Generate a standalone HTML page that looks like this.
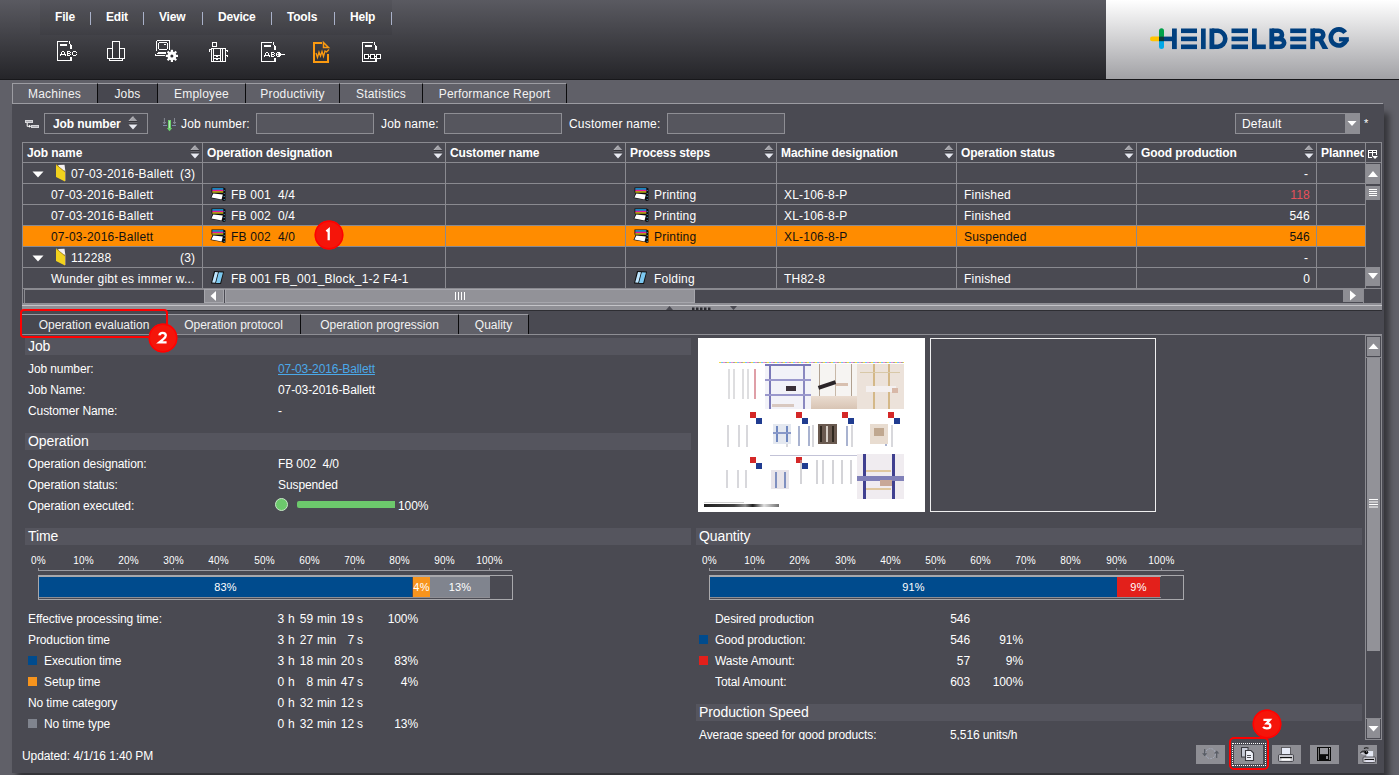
<!DOCTYPE html>
<html><head><meta charset="utf-8">
<style>
*{margin:0;padding:0;box-sizing:border-box}
html,body{width:1399px;height:775px;overflow:hidden}
body{background:#606068;font-family:"Liberation Sans",sans-serif;font-size:12px;color:#fff;position:relative}
.a{position:absolute}
.t{position:absolute;white-space:nowrap;line-height:14px;letter-spacing:0.2px}
#hdr{left:0;top:0;width:1399px;height:80px;background:linear-gradient(#5a5a61,#252529);border-bottom:1px solid #18181b}
#menubg{left:40px;top:0;width:352px;height:35px;background:rgba(0,0,0,0.05)}
.menu{font-weight:bold;font-size:12px;top:10px;letter-spacing:-0.2px}
.msep{top:12px;width:1px;height:13px;background:#a9b1c9}
#logo{left:1106px;top:0;width:293px;height:79px;background:linear-gradient(#ffffff,#a1a1a5)}
.tab{top:83px;height:20px;background:#606068;border-top:1px solid #9c9ca2;border-right:1px solid #0a0a0c;text-align:center;line-height:20px;color:#f2f2f2;letter-spacing:0.2px}
.tabsel{background:#47474f}
#main{left:12px;top:104px;width:1372px;height:669px;background:#4a4a52;box-shadow:5px 9px 6px rgba(0,0,0,0.45)}
.box{border:1px solid #8a8a90}
.grid{background:#8a8a90}
.hdt{font-weight:bold;color:#fff}
.cell{color:#fff}
</style></head><body>
<div id="hdr" class="a"></div>
<div id="menubg" class="a"></div>
<div class="t menu" style="left:55px">File</div>
<div class="a msep" style="left:90px"></div>
<div class="t menu" style="left:106px">Edit</div>
<div class="a msep" style="left:143px"></div>
<div class="t menu" style="left:159px">View</div>
<div class="a msep" style="left:202px"></div>
<div class="t menu" style="left:218px">Device</div>
<div class="a msep" style="left:271px"></div>
<div class="t menu" style="left:287px">Tools</div>
<div class="a msep" style="left:334px"></div>
<div class="t menu" style="left:350px">Help</div>
<div class="a msep" style="left:391px"></div>

<div id="logo" class="a"></div>

<!-- top tabs -->
<div class="a tab" style="left:12px;width:86px">Machines</div>
<div class="a tab tabsel" style="left:98px;width:60px">Jobs</div>
<div class="a tab" style="left:158px;width:88px">Employee</div>
<div class="a tab" style="left:246px;width:94px">Productivity</div>
<div class="a tab" style="left:340px;width:83px">Statistics</div>
<div class="a tab" style="left:423px;width:144px">Performance Report</div>

<div id="main" class="a"></div>
<div class="a" style="left:12px;top:103px;width:1371px;height:1px;background:#9c9ca2"></div>
<div class="a" style="left:12px;top:83px;width:1px;height:20px;background:#9c9ca2"></div>


<!-- filter row -->
<svg class="a" style="left:20px;top:113px" width="24" height="22" viewBox="0 0 24 22"><rect x="5" y="7" width="8" height="3" fill="#d8d8dc"/><rect x="6" y="8.2" width="6" height="0.7" fill="#9a9aa0"/><path d="M7.2 10 V13.3 H10.5" stroke="#fff" stroke-width="1" fill="none"/><path d="M9 11.8 L11 13.3 L9 14.8Z" fill="#fff"/><rect x="11" y="12" width="8" height="3" fill="#d8d8dc"/><rect x="12" y="13.2" width="6" height="0.7" fill="#9a9aa0"/></svg>
<div class="a" style="left:44px;top:113px;width:104px;height:21px;border:1px solid #8e8e94;background:#4a4a52"></div>
<div class="t" style="left:53px;top:117px;font-weight:bold;letter-spacing:-0.1px">Job number</div>
<svg class="a" style="left:128px;top:116px" width="10" height="14" viewBox="0 0 10 14"><path d="M0.5 5.2 L5 0.3 L9.5 5.2Z" fill="#a2a2a8"/><path d="M0.8 5 L5 0.5" stroke="#d4d4d8" stroke-width="0.7"/><rect x="0.5" y="5.2" width="9" height="1" fill="#2a2a30"/><rect x="0.5" y="6.2" width="9" height="1.3" fill="#6a6a72"/><rect x="0.5" y="7.5" width="9" height="1" fill="#2a2a30"/><path d="M0.5 8.5 L9.5 8.5 L5 13.6Z" fill="#e8eaf2"/></svg>
<svg class="a" style="left:158px;top:113px" width="24" height="22" viewBox="0 0 24 22"><path d="M6.4 5V10.5M5 9L6.4 10.8L7.8 9" stroke="#8a8e9a" stroke-width="0.9" fill="none"/><path d="M16.5 5V10.5M15.1 9L16.5 10.8L17.9 9" stroke="#8a8e9a" stroke-width="0.9" fill="none"/><rect x="5" y="12" width="4" height="1" fill="#7c88a8"/><rect x="14" y="12" width="4" height="1" fill="#7c88a8"/><rect x="10" y="7" width="3" height="8.5" fill="#6ccf6c"/><rect x="11.2" y="8" width="0.8" height="7" fill="#c8f0c8"/><path d="M8.8 15 L14.2 15 L11.5 18.3Z" fill="#6ccf6c"/></svg>
<div class="t" style="left:181px;top:117px">Job number:</div>
<div class="a" style="left:256px;top:113px;width:118px;height:21px;border:1px solid #8e8e94;background:#56565e"></div>
<div class="t" style="left:381px;top:117px">Job name:</div>
<div class="a" style="left:444px;top:113px;width:118px;height:21px;border:1px solid #8e8e94;background:#56565e"></div>
<div class="t" style="left:569px;top:117px">Customer name:</div>
<div class="a" style="left:667px;top:113px;width:118px;height:21px;border:1px solid #8e8e94;background:#56565e"></div>
<div class="a" style="left:1235px;top:113px;width:125px;height:21px;border:1px solid #8e8e94;background:#56565e"></div>
<div class="t" style="left:1242px;top:117px">Default</div>
<div class="a" style="left:1345px;top:114px;width:14px;height:19px;background:#8e8e94"></div>
<svg class="a" style="left:1345px;top:120px" width="14" height="8"><path d="M2.5 1 L11.5 1 L7 6Z" fill="#fff"/></svg>
<div class="t" style="left:1364px;top:116px;font-size:11px">*</div>

<div class="a" style="left:22px;top:142px;width:1360px;height:162px;background:#4a4a52"></div>
<div class="a" style="left:23px;top:226px;width:1342px;height:20px;background:#ff8c00"></div>
<div class="a grid" style="left:22px;top:142px;width:1360px;height:1px"></div>
<div class="a grid" style="left:22px;top:162px;width:1360px;height:1px"></div>
<div class="a grid" style="left:22px;top:183px;width:1344px;height:1px"></div>
<div class="a grid" style="left:22px;top:204px;width:1344px;height:1px"></div>
<div class="a grid" style="left:22px;top:225px;width:1344px;height:1px"></div>
<div class="a grid" style="left:22px;top:246px;width:1344px;height:1px"></div>
<div class="a grid" style="left:22px;top:267px;width:1344px;height:1px"></div>
<div class="a grid" style="left:22px;top:288px;width:1360px;height:1px"></div>
<div class="a grid" style="left:22px;top:303px;width:1360px;height:1px"></div>
<div class="a grid" style="left:22px;top:142px;width:1px;height:146px"></div>
<div class="a grid" style="left:202px;top:142px;width:1px;height:146px"></div>
<div class="a grid" style="left:445px;top:142px;width:1px;height:146px"></div>
<div class="a grid" style="left:625px;top:142px;width:1px;height:146px"></div>
<div class="a grid" style="left:776px;top:142px;width:1px;height:146px"></div>
<div class="a grid" style="left:956px;top:142px;width:1px;height:146px"></div>
<div class="a grid" style="left:1136px;top:142px;width:1px;height:146px"></div>
<div class="a grid" style="left:1316px;top:142px;width:1px;height:146px"></div>
<div class="a grid" style="left:1365px;top:142px;width:1px;height:146px"></div>
<div class="a grid" style="left:1381px;top:142px;width:1px;height:162px"></div>
<div class="a grid" style="left:22px;top:288px;width:1px;height:16px"></div>
<div class="t" style="left:27px;top:146px;font-weight:bold;letter-spacing:-0.1px">Job name</div>
<svg class="a" style="left:190px;top:145px" width="10" height="14" viewBox="0 0 10 14"><path d="M0.5 5.2 L5 0.3 L9.5 5.2Z" fill="#a2a2a8"/><path d="M0.8 5 L5 0.5" stroke="#d4d4d8" stroke-width="0.7"/><rect x="0.5" y="5.2" width="9" height="1" fill="#2a2a30"/><rect x="0.5" y="6.2" width="9" height="1.3" fill="#6a6a72"/><rect x="0.5" y="7.5" width="9" height="1" fill="#2a2a30"/><path d="M0.5 8.5 L9.5 8.5 L5 13.6Z" fill="#e8eaf2"/></svg>
<div class="t" style="left:207px;top:146px;font-weight:bold;letter-spacing:-0.1px">Operation designation</div>
<svg class="a" style="left:433px;top:145px" width="10" height="14" viewBox="0 0 10 14"><path d="M0.5 5.2 L5 0.3 L9.5 5.2Z" fill="#a2a2a8"/><path d="M0.8 5 L5 0.5" stroke="#d4d4d8" stroke-width="0.7"/><rect x="0.5" y="5.2" width="9" height="1" fill="#2a2a30"/><rect x="0.5" y="6.2" width="9" height="1.3" fill="#6a6a72"/><rect x="0.5" y="7.5" width="9" height="1" fill="#2a2a30"/><path d="M0.5 8.5 L9.5 8.5 L5 13.6Z" fill="#e8eaf2"/></svg>
<div class="t" style="left:450px;top:146px;font-weight:bold;letter-spacing:-0.1px">Customer name</div>
<svg class="a" style="left:613px;top:145px" width="10" height="14" viewBox="0 0 10 14"><path d="M0.5 5.2 L5 0.3 L9.5 5.2Z" fill="#a2a2a8"/><path d="M0.8 5 L5 0.5" stroke="#d4d4d8" stroke-width="0.7"/><rect x="0.5" y="5.2" width="9" height="1" fill="#2a2a30"/><rect x="0.5" y="6.2" width="9" height="1.3" fill="#6a6a72"/><rect x="0.5" y="7.5" width="9" height="1" fill="#2a2a30"/><path d="M0.5 8.5 L9.5 8.5 L5 13.6Z" fill="#e8eaf2"/></svg>
<div class="t" style="left:630px;top:146px;font-weight:bold;letter-spacing:-0.1px">Process steps</div>
<svg class="a" style="left:764px;top:145px" width="10" height="14" viewBox="0 0 10 14"><path d="M0.5 5.2 L5 0.3 L9.5 5.2Z" fill="#a2a2a8"/><path d="M0.8 5 L5 0.5" stroke="#d4d4d8" stroke-width="0.7"/><rect x="0.5" y="5.2" width="9" height="1" fill="#2a2a30"/><rect x="0.5" y="6.2" width="9" height="1.3" fill="#6a6a72"/><rect x="0.5" y="7.5" width="9" height="1" fill="#2a2a30"/><path d="M0.5 8.5 L9.5 8.5 L5 13.6Z" fill="#e8eaf2"/></svg>
<div class="t" style="left:781px;top:146px;font-weight:bold;letter-spacing:-0.1px">Machine designation</div>
<svg class="a" style="left:944px;top:145px" width="10" height="14" viewBox="0 0 10 14"><path d="M0.5 5.2 L5 0.3 L9.5 5.2Z" fill="#a2a2a8"/><path d="M0.8 5 L5 0.5" stroke="#d4d4d8" stroke-width="0.7"/><rect x="0.5" y="5.2" width="9" height="1" fill="#2a2a30"/><rect x="0.5" y="6.2" width="9" height="1.3" fill="#6a6a72"/><rect x="0.5" y="7.5" width="9" height="1" fill="#2a2a30"/><path d="M0.5 8.5 L9.5 8.5 L5 13.6Z" fill="#e8eaf2"/></svg>
<div class="t" style="left:961px;top:146px;font-weight:bold;letter-spacing:-0.1px">Operation status</div>
<svg class="a" style="left:1124px;top:145px" width="10" height="14" viewBox="0 0 10 14"><path d="M0.5 5.2 L5 0.3 L9.5 5.2Z" fill="#a2a2a8"/><path d="M0.8 5 L5 0.5" stroke="#d4d4d8" stroke-width="0.7"/><rect x="0.5" y="5.2" width="9" height="1" fill="#2a2a30"/><rect x="0.5" y="6.2" width="9" height="1.3" fill="#6a6a72"/><rect x="0.5" y="7.5" width="9" height="1" fill="#2a2a30"/><path d="M0.5 8.5 L9.5 8.5 L5 13.6Z" fill="#e8eaf2"/></svg>
<div class="t" style="left:1141px;top:146px;font-weight:bold;letter-spacing:-0.1px">Good production</div>
<svg class="a" style="left:1304px;top:145px" width="10" height="14" viewBox="0 0 10 14"><path d="M0.5 5.2 L5 0.3 L9.5 5.2Z" fill="#a2a2a8"/><path d="M0.8 5 L5 0.5" stroke="#d4d4d8" stroke-width="0.7"/><rect x="0.5" y="5.2" width="9" height="1" fill="#2a2a30"/><rect x="0.5" y="6.2" width="9" height="1.3" fill="#6a6a72"/><rect x="0.5" y="7.5" width="9" height="1" fill="#2a2a30"/><path d="M0.5 8.5 L9.5 8.5 L5 13.6Z" fill="#e8eaf2"/></svg>
<div class="t" style="left:1321px;top:146px;width:43px;overflow:hidden;font-weight:bold;letter-spacing:-0.1px">Planned</div>
<svg class="a" style="left:32px;top:171px" width="12" height="7"><path d="M0.5 0.5 L11.5 0.5 L6 6.5Z" fill="#fff"/></svg>
<svg class="a" style="left:55px;top:164px" width="12" height="18" viewBox="0 0 12 18"><path d="M3 1 L9.5 0.8 L10.5 8 L4 3Z" fill="#f4f0f0"/><path d="M9.5 6 L11 7 L11 17 L9.8 17Z" fill="#8a7a70"/><path d="M1 0.5 L4 3 L10 8 L10 17.5 L1 13Z" fill="#f2d21e"/><path d="M1 0.5 L4 3 L10 8" stroke="#b08a10" stroke-width="0.7" fill="none"/></svg>
<div class="t" style="left:71px;top:167px;">07-03-2016-Ballett</div>
<div class="t" style="left:180px;top:167px;">(3)</div>
<div class="t" style="left:1304px;top:167px;">-</div>
<div class="t" style="left:51px;top:188px;color:#fff">07-03-2016-Ballett</div>
<svg class="a" style="left:210px;top:187px" width="16" height="15" viewBox="0 0 16 15"><path d="M1.5 0.5 L13.5 0.5 L15.5 1.5 L15.5 13.5 L13.5 14 L12 13 L0.5 11 L2.5 6 L1.5 5.5Z" fill="#0c0c10"/><rect x="2.3" y="1.2" width="11" height="1.6" fill="#18a8e8"/><rect x="2.3" y="2.8" width="11" height="1.5" fill="#e8189a"/><rect x="2.3" y="4.3" width="11" height="1.3" fill="#e0d010"/><path d="M3.3 6.5 L12.8 7.6 L11.6 12.6 L1.4 10.6Z" fill="#fff"/><path d="M14.2 3v1M14.2 6v1M14.2 9v1M14.2 12v1" stroke="#4ab0d0" stroke-width="0.9"/></svg>
<div class="t" style="left:231px;top:188px;color:#fff">FB 001&nbsp; 4/4</div>
<svg class="a" style="left:633px;top:187px" width="16" height="15" viewBox="0 0 16 15"><path d="M1.5 0.5 L13.5 0.5 L15.5 1.5 L15.5 13.5 L13.5 14 L12 13 L0.5 11 L2.5 6 L1.5 5.5Z" fill="#0c0c10"/><rect x="2.3" y="1.2" width="11" height="1.6" fill="#18a8e8"/><rect x="2.3" y="2.8" width="11" height="1.5" fill="#e8189a"/><rect x="2.3" y="4.3" width="11" height="1.3" fill="#e0d010"/><path d="M3.3 6.5 L12.8 7.6 L11.6 12.6 L1.4 10.6Z" fill="#fff"/><path d="M14.2 3v1M14.2 6v1M14.2 9v1M14.2 12v1" stroke="#4ab0d0" stroke-width="0.9"/></svg>
<div class="t" style="left:654px;top:188px;color:#fff">Printing</div>
<div class="t" style="left:784px;top:188px;color:#fff">XL-106-8-P</div>
<div class="t" style="left:964px;top:188px;color:#fff">Finished</div>
<div class="t" style="left:1200px;width:110px;text-align:right;top:188px;color:#e8505a">118</div>
<div class="t" style="left:51px;top:209px;color:#fff">07-03-2016-Ballett</div>
<svg class="a" style="left:210px;top:208px" width="16" height="15" viewBox="0 0 16 15"><path d="M1.5 0.5 L13.5 0.5 L15.5 1.5 L15.5 13.5 L13.5 14 L12 13 L0.5 11 L2.5 6 L1.5 5.5Z" fill="#0c0c10"/><rect x="2.3" y="1.2" width="11" height="1.6" fill="#18a8e8"/><rect x="2.3" y="2.8" width="11" height="1.5" fill="#e8189a"/><rect x="2.3" y="4.3" width="11" height="1.3" fill="#e0d010"/><path d="M3.3 6.5 L12.8 7.6 L11.6 12.6 L1.4 10.6Z" fill="#fff"/><path d="M14.2 3v1M14.2 6v1M14.2 9v1M14.2 12v1" stroke="#4ab0d0" stroke-width="0.9"/></svg>
<div class="t" style="left:231px;top:209px;color:#fff">FB 002&nbsp; 0/4</div>
<svg class="a" style="left:633px;top:208px" width="16" height="15" viewBox="0 0 16 15"><path d="M1.5 0.5 L13.5 0.5 L15.5 1.5 L15.5 13.5 L13.5 14 L12 13 L0.5 11 L2.5 6 L1.5 5.5Z" fill="#0c0c10"/><rect x="2.3" y="1.2" width="11" height="1.6" fill="#18a8e8"/><rect x="2.3" y="2.8" width="11" height="1.5" fill="#e8189a"/><rect x="2.3" y="4.3" width="11" height="1.3" fill="#e0d010"/><path d="M3.3 6.5 L12.8 7.6 L11.6 12.6 L1.4 10.6Z" fill="#fff"/><path d="M14.2 3v1M14.2 6v1M14.2 9v1M14.2 12v1" stroke="#4ab0d0" stroke-width="0.9"/></svg>
<div class="t" style="left:654px;top:209px;color:#fff">Printing</div>
<div class="t" style="left:784px;top:209px;color:#fff">XL-106-8-P</div>
<div class="t" style="left:964px;top:209px;color:#fff">Finished</div>
<div class="t" style="left:1200px;width:110px;text-align:right;top:209px;color:#fff">546</div>
<div class="t" style="left:51px;top:230px;color:#111">07-03-2016-Ballett</div>
<svg class="a" style="left:210px;top:229px" width="16" height="15" viewBox="0 0 16 15"><path d="M1.5 0.5 L13.5 0.5 L15.5 1.5 L15.5 13.5 L13.5 14 L12 13 L0.5 11 L2.5 6 L1.5 5.5Z" fill="#0c0c10"/><rect x="2.3" y="1.2" width="11" height="1.6" fill="#18a8e8"/><rect x="2.3" y="2.8" width="11" height="1.5" fill="#e8189a"/><rect x="2.3" y="4.3" width="11" height="1.3" fill="#e0d010"/><path d="M3.3 6.5 L12.8 7.6 L11.6 12.6 L1.4 10.6Z" fill="#fff"/><path d="M14.2 3v1M14.2 6v1M14.2 9v1M14.2 12v1" stroke="#4ab0d0" stroke-width="0.9"/></svg>
<div class="t" style="left:231px;top:230px;color:#111">FB 002&nbsp; 4/0</div>
<svg class="a" style="left:633px;top:229px" width="16" height="15" viewBox="0 0 16 15"><path d="M1.5 0.5 L13.5 0.5 L15.5 1.5 L15.5 13.5 L13.5 14 L12 13 L0.5 11 L2.5 6 L1.5 5.5Z" fill="#0c0c10"/><rect x="2.3" y="1.2" width="11" height="1.6" fill="#18a8e8"/><rect x="2.3" y="2.8" width="11" height="1.5" fill="#e8189a"/><rect x="2.3" y="4.3" width="11" height="1.3" fill="#e0d010"/><path d="M3.3 6.5 L12.8 7.6 L11.6 12.6 L1.4 10.6Z" fill="#fff"/><path d="M14.2 3v1M14.2 6v1M14.2 9v1M14.2 12v1" stroke="#4ab0d0" stroke-width="0.9"/></svg>
<div class="t" style="left:654px;top:230px;color:#111">Printing</div>
<div class="t" style="left:784px;top:230px;color:#111">XL-106-8-P</div>
<div class="t" style="left:964px;top:230px;color:#111">Suspended</div>
<div class="t" style="left:1200px;width:110px;text-align:right;top:230px;color:#111">546</div>
<svg class="a" style="left:32px;top:255px" width="12" height="7"><path d="M0.5 0.5 L11.5 0.5 L6 6.5Z" fill="#fff"/></svg>
<svg class="a" style="left:55px;top:248px" width="12" height="18" viewBox="0 0 12 18"><path d="M3 1 L9.5 0.8 L10.5 8 L4 3Z" fill="#f4f0f0"/><path d="M9.5 6 L11 7 L11 17 L9.8 17Z" fill="#8a7a70"/><path d="M1 0.5 L4 3 L10 8 L10 17.5 L1 13Z" fill="#f2d21e"/><path d="M1 0.5 L4 3 L10 8" stroke="#b08a10" stroke-width="0.7" fill="none"/></svg>
<div class="t" style="left:71px;top:251px;">112288</div>
<div class="t" style="left:180px;top:251px;">(3)</div>
<div class="t" style="left:1304px;top:251px;">-</div>
<div class="t" style="left:51px;top:272px;">Wunder gibt es immer w...</div>
<svg class="a" style="left:210px;top:270px" width="16" height="15" viewBox="0 0 16 15"><path d="M4 1 L14 1.5 L11 14 L1 13.5Z" fill="#111"/><path d="M5 2 L8 2.2 L5.2 12.8 L2.2 12.6Z" fill="#bfe6ff"/><path d="M8.8 2.2 L13 2.5 L10.2 13 L6 12.9Z" fill="#7cc8f0"/></svg>
<div class="t" style="left:231px;top:272px;">FB 001 FB_001_Block_1-2 F4-1</div>
<svg class="a" style="left:633px;top:270px" width="16" height="15" viewBox="0 0 16 15"><path d="M4 1 L14 1.5 L11 14 L1 13.5Z" fill="#111"/><path d="M5 2 L8 2.2 L5.2 12.8 L2.2 12.6Z" fill="#bfe6ff"/><path d="M8.8 2.2 L13 2.5 L10.2 13 L6 12.9Z" fill="#7cc8f0"/></svg>
<div class="t" style="left:654px;top:272px;">Folding</div>
<div class="t" style="left:784px;top:272px;">TH82-8</div>
<div class="t" style="left:964px;top:272px;">Finished</div>
<div class="t" style="left:1200px;width:110px;text-align:right;top:272px">0</div>
<div class="a" style="left:24px;top:289px;width:1340px;height:14px;border:1px solid #8a8a90;border-bottom:none;background:#4a4a52"></div>
<div class="a" style="left:204px;top:289px;width:20px;height:14px;background:#8e8e94;border:1px solid #a6a6ac"></div>
<svg class="a" style="left:204px;top:289px" width="20" height="14"><path d="M6.5 7 L12 2 L12 12Z" fill="#fff"/></svg>
<div class="a" style="left:225px;top:289px;width:470px;height:14px;background:#929298;border:1px solid #a6a6ac"></div>
<svg class="a" style="left:454px;top:291px" width="12" height="10" shape-rendering="crispEdges"><path d="M1.5 1V9M4.5 1V9M7.5 1V9M10.5 1V9" stroke="#fff" stroke-width="1"/></svg>
<div class="a" style="left:1343px;top:289px;width:20px;height:13px;background:#8e8e94"></div>
<svg class="a" style="left:1343px;top:289px" width="20" height="13"><path d="M7 1.5 L13 6.5 L7 11.5Z" fill="#fff"/></svg>
<div class="a" style="left:1366px;top:164px;width:14px;height:20px;background:#8e8e94"></div>
<svg class="a" style="left:1366px;top:164px" width="14" height="20"><path d="M2 13 L7 7 L12 13Z" fill="#fff"/></svg>
<div class="a" style="left:1366px;top:186px;width:14px;height:14px;background:#8e8e94"></div>
<svg class="a" style="left:1368px;top:188px" width="10" height="10"><path d="M1 1.5H9M1 3.5H9M1 5.5H9M1 7.5H9" stroke="#fff" stroke-width="1"/></svg>
<div class="a" style="left:1366px;top:267px;width:14px;height:19px;background:#8e8e94"></div>
<svg class="a" style="left:1366px;top:267px" width="14" height="19"><path d="M2 6 L12 6 L7 12Z" fill="#fff"/></svg>
<svg class="a" style="left:1367px;top:149px" width="12" height="11" viewBox="0 0 12 11" shape-rendering="crispEdges"><rect x="1" y="1" width="9" height="3" fill="#fff"/><rect x="2" y="2" width="3" height="1" fill="#2a2a30"/><rect x="6" y="2" width="3" height="1" fill="#2a2a30"/><rect x="1" y="4" width="1" height="5" fill="#fff"/><rect x="1" y="8" width="4" height="1" fill="#fff"/><rect x="5" y="4" width="1" height="3" fill="#fff"/><rect x="9" y="4" width="1" height="2" fill="#fff"/><path d="M5 7 L11 7 L8 10Z" fill="#fff" shape-rendering="auto"/></svg>
<div class="a" style="left:22px;top:303px;width:1360px;height:7px;background:#8f8f95"></div>
<div class="a" style="left:22px;top:305px;width:1360px;height:1px;background:#c4c4c8"></div>
<div class="a" style="left:22px;top:310px;width:1360px;height:1px;background:#2e2e33"></div>
<svg class="a" style="left:664px;top:305px" width="76" height="6"><path d="M2 5 L5.5 1 L9 5Z" fill="#4a4a52"/><path d="M28 2.5h2.5v2.5h-2.5zM32 2.5h2.5v2.5h-2.5zM36 2.5h2.5v2.5h-2.5zM40 2.5h2.5v2.5h-2.5zM44 2.5h2.5v2.5h-2.5z" fill="#2a2a30"/><path d="M66 1 L73 1 L69.5 5Z" fill="#4a4a52"/></svg>
<div class="a" style="left:22px;top:334px;width:1360px;height:1px;background:#8e8e94"></div>
<div class="a tab" style="top:314px;letter-spacing:0;left:22px;width:145px;height:20px;background:#47474f">Operation evaluation</div>
<div class="a tab" style="top:314px;letter-spacing:0;left:167px;width:134px;height:20px;background:#606068">Operation protocol</div>
<div class="a tab" style="top:314px;letter-spacing:0;left:301px;width:158px;height:20px;background:#606068">Operation progression</div>
<div class="a tab" style="top:314px;letter-spacing:0;left:459px;width:70px;height:20px;background:#606068">Quality</div>
<div class="a" style="left:25px;top:338px;width:666px;height:17px;background:#55555e"></div>
<div class="t" style="left:28px;top:338px;font-size:14px;line-height:16px;letter-spacing:-0.1px">Job</div>
<div class="a" style="left:25px;top:433px;width:666px;height:17px;background:#55555e"></div>
<div class="t" style="left:28px;top:433px;font-size:14px;line-height:16px;letter-spacing:-0.1px">Operation</div>
<div class="a" style="left:25px;top:528px;width:666px;height:17px;background:#55555e"></div>
<div class="t" style="left:28px;top:528px;font-size:14px;line-height:16px;letter-spacing:-0.1px">Time</div>
<div class="a" style="left:696px;top:528px;width:666px;height:17px;background:#55555e"></div>
<div class="t" style="left:699px;top:528px;font-size:14px;line-height:16px;letter-spacing:-0.1px">Quantity</div>
<div class="a" style="left:696px;top:704px;width:666px;height:17px;background:#55555e"></div>
<div class="t" style="left:699px;top:704px;font-size:14px;line-height:16px;letter-spacing:-0.1px">Production Speed</div>
<div class="t" style="letter-spacing:-0.1px;left:28px;top:362px;">Job number:</div>
<div class="t" style="letter-spacing:-0.1px;left:278px;top:362px;"><span style="color:#4aa8e8;text-decoration:underline">07-03-2016-Ballett</span></div>
<div class="t" style="letter-spacing:-0.1px;left:28px;top:383px;">Job Name:</div>
<div class="t" style="letter-spacing:-0.1px;left:278px;top:383px;">07-03-2016-Ballett</div>
<div class="t" style="letter-spacing:-0.1px;left:28px;top:404px;">Customer Name:</div>
<div class="t" style="letter-spacing:-0.1px;left:278px;top:404px;">-</div>
<div class="t" style="letter-spacing:-0.1px;left:28px;top:457px;">Operation designation:</div>
<div class="t" style="letter-spacing:-0.1px;left:278px;top:457px;">FB 002&nbsp; 4/0</div>
<div class="t" style="letter-spacing:-0.1px;left:28px;top:478px;">Operation status:</div>
<div class="t" style="letter-spacing:-0.1px;left:278px;top:478px;">Suspended</div>
<div class="t" style="letter-spacing:-0.1px;left:28px;top:499px;">Operation executed:</div>
<div class="a" style="left:275px;top:498px;width:13px;height:13px;border-radius:50%;background:#6cc96c;border:1px solid #c8e8c8"></div>
<div class="a" style="left:297px;top:501px;width:98px;height:7px;background:#6cc96c;border-radius:2px 0 0 2px"></div>
<div class="t" style="letter-spacing:-0.1px;left:398px;top:499px;">100%</div>
<div class="a" style="left:698px;top:338px;width:227px;height:174px;background:#fff"></div>
<div class="a" style="left:930px;top:338px;width:226px;height:174px;border:1px solid #f0f0f0"></div>
<div class="a" style="left:38px;top:570px;width:474px;height:1px;background:#9a9aa0"></div>
<div class="a" style="left:38px;top:568px;width:1px;height:3px;background:#9a9aa0"></div>
<div class="t" style="left:18px;width:41px;text-align:center;top:555px;font-size:10px;line-height:12px">0%</div>
<div class="a" style="left:83px;top:568px;width:1px;height:3px;background:#9a9aa0"></div>
<div class="t" style="left:63px;width:41px;text-align:center;top:555px;font-size:10px;line-height:12px">10%</div>
<div class="a" style="left:128px;top:568px;width:1px;height:3px;background:#9a9aa0"></div>
<div class="t" style="left:108px;width:41px;text-align:center;top:555px;font-size:10px;line-height:12px">20%</div>
<div class="a" style="left:173px;top:568px;width:1px;height:3px;background:#9a9aa0"></div>
<div class="t" style="left:153px;width:41px;text-align:center;top:555px;font-size:10px;line-height:12px">30%</div>
<div class="a" style="left:218px;top:568px;width:1px;height:3px;background:#9a9aa0"></div>
<div class="t" style="left:198px;width:41px;text-align:center;top:555px;font-size:10px;line-height:12px">40%</div>
<div class="a" style="left:264px;top:568px;width:1px;height:3px;background:#9a9aa0"></div>
<div class="t" style="left:244px;width:41px;text-align:center;top:555px;font-size:10px;line-height:12px">50%</div>
<div class="a" style="left:309px;top:568px;width:1px;height:3px;background:#9a9aa0"></div>
<div class="t" style="left:289px;width:41px;text-align:center;top:555px;font-size:10px;line-height:12px">60%</div>
<div class="a" style="left:354px;top:568px;width:1px;height:3px;background:#9a9aa0"></div>
<div class="t" style="left:334px;width:41px;text-align:center;top:555px;font-size:10px;line-height:12px">70%</div>
<div class="a" style="left:399px;top:568px;width:1px;height:3px;background:#9a9aa0"></div>
<div class="t" style="left:379px;width:41px;text-align:center;top:555px;font-size:10px;line-height:12px">80%</div>
<div class="a" style="left:444px;top:568px;width:1px;height:3px;background:#9a9aa0"></div>
<div class="t" style="left:424px;width:41px;text-align:center;top:555px;font-size:10px;line-height:12px">90%</div>
<div class="a" style="left:489px;top:568px;width:1px;height:3px;background:#9a9aa0"></div>
<div class="t" style="left:469px;width:41px;text-align:center;top:555px;font-size:10px;line-height:12px">100%</div>
<div class="a" style="left:38px;top:575px;width:475px;height:25px;border:1px solid #a8a8ac"></div>
<div class="a" style="left:39px;top:576px;width:451px;height:1px;background:#a8a8ac"></div>
<div class="a" style="left:39px;top:597px;width:451px;height:1px;background:#8e8e94"></div>
<div class="a" style="left:39px;top:577px;width:373px;height:20px;background:#004b8d"></div>
<div class="a" style="left:413px;top:577px;width:17px;height:20px;background:#f7941d"></div>
<div class="a" style="left:430px;top:577px;width:60px;height:20px;background:#80848e"></div>
<div class="t" style="left:39px;width:373px;text-align:center;top:580px;font-size:11px">83%</div>
<div class="t" style="left:412px;width:19px;text-align:center;top:580px;font-size:11px">4%</div>
<div class="t" style="left:430px;width:60px;text-align:center;top:580px;font-size:11px">13%</div>
<div class="a" style="left:709px;top:570px;width:475px;height:1px;background:#9a9aa0"></div>
<div class="a" style="left:709px;top:568px;width:1px;height:3px;background:#9a9aa0"></div>
<div class="t" style="left:689px;width:41px;text-align:center;top:555px;font-size:10px;line-height:12px">0%</div>
<div class="a" style="left:754px;top:568px;width:1px;height:3px;background:#9a9aa0"></div>
<div class="t" style="left:734px;width:41px;text-align:center;top:555px;font-size:10px;line-height:12px">10%</div>
<div class="a" style="left:799px;top:568px;width:1px;height:3px;background:#9a9aa0"></div>
<div class="t" style="left:779px;width:41px;text-align:center;top:555px;font-size:10px;line-height:12px">20%</div>
<div class="a" style="left:845px;top:568px;width:1px;height:3px;background:#9a9aa0"></div>
<div class="t" style="left:825px;width:41px;text-align:center;top:555px;font-size:10px;line-height:12px">30%</div>
<div class="a" style="left:890px;top:568px;width:1px;height:3px;background:#9a9aa0"></div>
<div class="t" style="left:870px;width:41px;text-align:center;top:555px;font-size:10px;line-height:12px">40%</div>
<div class="a" style="left:935px;top:568px;width:1px;height:3px;background:#9a9aa0"></div>
<div class="t" style="left:915px;width:41px;text-align:center;top:555px;font-size:10px;line-height:12px">50%</div>
<div class="a" style="left:980px;top:568px;width:1px;height:3px;background:#9a9aa0"></div>
<div class="t" style="left:960px;width:41px;text-align:center;top:555px;font-size:10px;line-height:12px">60%</div>
<div class="a" style="left:1025px;top:568px;width:1px;height:3px;background:#9a9aa0"></div>
<div class="t" style="left:1005px;width:41px;text-align:center;top:555px;font-size:10px;line-height:12px">70%</div>
<div class="a" style="left:1070px;top:568px;width:1px;height:3px;background:#9a9aa0"></div>
<div class="t" style="left:1050px;width:41px;text-align:center;top:555px;font-size:10px;line-height:12px">80%</div>
<div class="a" style="left:1116px;top:568px;width:1px;height:3px;background:#9a9aa0"></div>
<div class="t" style="left:1096px;width:41px;text-align:center;top:555px;font-size:10px;line-height:12px">90%</div>
<div class="a" style="left:1161px;top:568px;width:1px;height:3px;background:#9a9aa0"></div>
<div class="t" style="left:1141px;width:41px;text-align:center;top:555px;font-size:10px;line-height:12px">100%</div>
<div class="a" style="left:709px;top:575px;width:475px;height:25px;border:1px solid #a8a8ac"></div>
<div class="a" style="left:710px;top:576px;width:451px;height:1px;background:#a8a8ac"></div>
<div class="a" style="left:710px;top:597px;width:451px;height:1px;background:#8e8e94"></div>
<div class="a" style="left:710px;top:577px;width:407px;height:20px;background:#004b8d"></div>
<div class="a" style="left:1117px;top:577px;width:43px;height:20px;background:#e3201b"></div>
<div class="t" style="left:710px;width:407px;text-align:center;top:580px;font-size:11px">91%</div>
<div class="t" style="left:1117px;width:43px;text-align:center;top:580px;font-size:11px">9%</div>
<div class="t" style="letter-spacing:-0.1px;left:28px;top:612px;">Effective processing time:</div>
<div class="t" style="letter-spacing:-0.1px;left:84px;width:200px;text-align:right;top:612px;">3</div>
<div class="t" style="letter-spacing:-0.1px;left:288px;top:612px;">h</div>
<div class="t" style="letter-spacing:-0.1px;left:113px;width:200px;text-align:right;top:612px;">59</div>
<div class="t" style="letter-spacing:-0.1px;left:317px;top:612px;">min</div>
<div class="t" style="letter-spacing:-0.1px;left:154px;width:200px;text-align:right;top:612px;">19</div>
<div class="t" style="letter-spacing:-0.1px;left:357px;top:612px;">s</div>
<div class="t" style="letter-spacing:-0.1px;left:218px;width:200px;text-align:right;top:612px;">100%</div>
<div class="t" style="letter-spacing:-0.1px;left:28px;top:633px;">Production time</div>
<div class="t" style="letter-spacing:-0.1px;left:84px;width:200px;text-align:right;top:633px;">3</div>
<div class="t" style="letter-spacing:-0.1px;left:288px;top:633px;">h</div>
<div class="t" style="letter-spacing:-0.1px;left:113px;width:200px;text-align:right;top:633px;">27</div>
<div class="t" style="letter-spacing:-0.1px;left:317px;top:633px;">min</div>
<div class="t" style="letter-spacing:-0.1px;left:154px;width:200px;text-align:right;top:633px;">7</div>
<div class="t" style="letter-spacing:-0.1px;left:357px;top:633px;">s</div>
<div class="a" style="left:28px;top:656px;width:9px;height:9px;background:#004b8d"></div>
<div class="t" style="letter-spacing:-0.1px;left:44px;top:654px;">Execution time</div>
<div class="t" style="letter-spacing:-0.1px;left:84px;width:200px;text-align:right;top:654px;">3</div>
<div class="t" style="letter-spacing:-0.1px;left:288px;top:654px;">h</div>
<div class="t" style="letter-spacing:-0.1px;left:113px;width:200px;text-align:right;top:654px;">18</div>
<div class="t" style="letter-spacing:-0.1px;left:317px;top:654px;">min</div>
<div class="t" style="letter-spacing:-0.1px;left:154px;width:200px;text-align:right;top:654px;">20</div>
<div class="t" style="letter-spacing:-0.1px;left:357px;top:654px;">s</div>
<div class="t" style="letter-spacing:-0.1px;left:218px;width:200px;text-align:right;top:654px;">83%</div>
<div class="a" style="left:28px;top:677px;width:9px;height:9px;background:#f7941d"></div>
<div class="t" style="letter-spacing:-0.1px;left:44px;top:675px;">Setup time</div>
<div class="t" style="letter-spacing:-0.1px;left:84px;width:200px;text-align:right;top:675px;">0</div>
<div class="t" style="letter-spacing:-0.1px;left:288px;top:675px;">h</div>
<div class="t" style="letter-spacing:-0.1px;left:113px;width:200px;text-align:right;top:675px;">8</div>
<div class="t" style="letter-spacing:-0.1px;left:317px;top:675px;">min</div>
<div class="t" style="letter-spacing:-0.1px;left:154px;width:200px;text-align:right;top:675px;">47</div>
<div class="t" style="letter-spacing:-0.1px;left:357px;top:675px;">s</div>
<div class="t" style="letter-spacing:-0.1px;left:218px;width:200px;text-align:right;top:675px;">4%</div>
<div class="t" style="letter-spacing:-0.1px;left:28px;top:696px;">No time category</div>
<div class="t" style="letter-spacing:-0.1px;left:84px;width:200px;text-align:right;top:696px;">0</div>
<div class="t" style="letter-spacing:-0.1px;left:288px;top:696px;">h</div>
<div class="t" style="letter-spacing:-0.1px;left:113px;width:200px;text-align:right;top:696px;">32</div>
<div class="t" style="letter-spacing:-0.1px;left:317px;top:696px;">min</div>
<div class="t" style="letter-spacing:-0.1px;left:154px;width:200px;text-align:right;top:696px;">12</div>
<div class="t" style="letter-spacing:-0.1px;left:357px;top:696px;">s</div>
<div class="a" style="left:28px;top:719px;width:9px;height:9px;background:#80848e"></div>
<div class="t" style="letter-spacing:-0.1px;left:44px;top:717px;">No time type</div>
<div class="t" style="letter-spacing:-0.1px;left:84px;width:200px;text-align:right;top:717px;">0</div>
<div class="t" style="letter-spacing:-0.1px;left:288px;top:717px;">h</div>
<div class="t" style="letter-spacing:-0.1px;left:113px;width:200px;text-align:right;top:717px;">32</div>
<div class="t" style="letter-spacing:-0.1px;left:317px;top:717px;">min</div>
<div class="t" style="letter-spacing:-0.1px;left:154px;width:200px;text-align:right;top:717px;">12</div>
<div class="t" style="letter-spacing:-0.1px;left:357px;top:717px;">s</div>
<div class="t" style="letter-spacing:-0.1px;left:218px;width:200px;text-align:right;top:717px;">13%</div>
<div class="t" style="letter-spacing:-0.1px;left:715px;top:612px;">Desired production</div>
<div class="t" style="letter-spacing:-0.1px;left:770px;width:200px;text-align:right;top:612px;">546</div>
<div class="a" style="left:699px;top:635px;width:9px;height:9px;background:#004b8d"></div>
<div class="t" style="letter-spacing:-0.1px;left:715px;top:633px;">Good production:</div>
<div class="t" style="letter-spacing:-0.1px;left:770px;width:200px;text-align:right;top:633px;">546</div>
<div class="t" style="letter-spacing:-0.1px;left:823px;width:200px;text-align:right;top:633px;">91%</div>
<div class="a" style="left:699px;top:656px;width:9px;height:9px;background:#e3201b"></div>
<div class="t" style="letter-spacing:-0.1px;left:715px;top:654px;">Waste Amount:</div>
<div class="t" style="letter-spacing:-0.1px;left:770px;width:200px;text-align:right;top:654px;">57</div>
<div class="t" style="letter-spacing:-0.1px;left:823px;width:200px;text-align:right;top:654px;">9%</div>
<div class="t" style="letter-spacing:-0.1px;left:715px;top:675px;">Total Amount:</div>
<div class="t" style="letter-spacing:-0.1px;left:770px;width:200px;text-align:right;top:675px;">603</div>
<div class="t" style="letter-spacing:-0.1px;left:823px;width:200px;text-align:right;top:675px;">100%</div>
<div class="t" style="letter-spacing:-0.1px;left:699px;top:728px;">Average speed for good products:</div>
<div class="t" style="letter-spacing:-0.1px;left:950px;top:728px;">5,516 units/h</div>
<div class="t" style="letter-spacing:-0.1px;left:22px;top:749px;">Updated: 4/1/16 1:40 PM</div>
<div class="a" style="left:696px;top:740px;width:668px;height:4px;background:#4a4a52"></div>
<svg class="a" style="left:0;top:0" width="400" height="70" viewBox="0 0 400 70">
<g fill="#fff" shape-rendering="crispEdges">
<rect x="57" y="41" width="1" height="20"/><rect x="57" y="41" width="11" height="1"/><rect x="69" y="41" width="1.3" height="3"/><rect x="69.5" y="44" width="1" height="1"/><rect x="70.3" y="45" width="1.3" height="4"/><rect x="57" y="60" width="15" height="1.2"/><rect x="70.3" y="57" width="1.3" height="4"/><rect x="60" y="44" width="7" height="2"/>
<g fill="#fff" shape-rendering="crispEdges"><rect x="62" y="51" width="1" height="1"/><rect x="63" y="51" width="1" height="1"/><rect x="61" y="52" width="1" height="1"/><rect x="64" y="52" width="1" height="1"/><rect x="61" y="53" width="1" height="1"/><rect x="64" y="53" width="1" height="1"/><rect x="60" y="54" width="1" height="1"/><rect x="61" y="54" width="1" height="1"/><rect x="62" y="54" width="1" height="1"/><rect x="63" y="54" width="1" height="1"/><rect x="64" y="54" width="1" height="1"/><rect x="65" y="54" width="1" height="1"/><rect x="60" y="55" width="1" height="1"/><rect x="65" y="55" width="1" height="1"/><rect x="67" y="51" width="1" height="1"/><rect x="68" y="51" width="1" height="1"/><rect x="69" y="51" width="1" height="1"/><rect x="67" y="52" width="1" height="1"/><rect x="70" y="52" width="1" height="1"/><rect x="67" y="53" width="1" height="1"/><rect x="68" y="53" width="1" height="1"/><rect x="69" y="53" width="1" height="1"/><rect x="67" y="54" width="1" height="1"/><rect x="70" y="54" width="1" height="1"/><rect x="67" y="55" width="1" height="1"/><rect x="68" y="55" width="1" height="1"/><rect x="69" y="55" width="1" height="1"/><rect x="73" y="51" width="1" height="1"/><rect x="74" y="51" width="1" height="1"/><rect x="75" y="51" width="1" height="1"/><rect x="72" y="52" width="1" height="1"/><rect x="76" y="52" width="1" height="1"/><rect x="72" y="53" width="1" height="1"/><rect x="72" y="54" width="1" height="1"/><rect x="76" y="54" width="1" height="1"/><rect x="73" y="55" width="1" height="1"/><rect x="74" y="55" width="1" height="1"/><rect x="75" y="55" width="1" height="1"/></g>
<rect x="112" y="41" width="8" height="1"/><rect x="112" y="41" width="1" height="18"/><rect x="119" y="41" width="1" height="18"/>
<rect x="107" y="48" width="5" height="1"/><rect x="120" y="48" width="5" height="1"/><rect x="107" y="48" width="1" height="11"/><rect x="124" y="48" width="1" height="11"/>
<rect x="107" y="58" width="18" height="1"/><rect x="109" y="58" width="1" height="3"/><rect x="122" y="58" width="1" height="3"/><rect x="109" y="60" width="14" height="1"/>
<rect x="157" y="40" width="13" height="1"/><rect x="156" y="41" width="1" height="10"/><rect x="169" y="41" width="1" height="9"/>
<rect x="159" y="42" width="8" height="1"/><rect x="158" y="43" width="1" height="6"/><rect x="167" y="43" width="1" height="6"/><rect x="159" y="49" width="8" height="1"/><rect x="164" y="44" width="2" height="1"/>
<rect x="158" y="51.5" width="8" height="1"/><rect x="157" y="53" width="9" height="1"/><rect x="155" y="55" width="10" height="1.2"/><rect x="155" y="54" width="1" height="2"/>
<g fill="#fff" shape-rendering="auto"><circle cx="171.9" cy="55.9" r="4.4"/><rect x="170.80" y="49.80" width="2.2" height="3" transform="rotate(0 171.9 55.9)"/><rect x="170.80" y="49.80" width="2.2" height="3" transform="rotate(45 171.9 55.9)"/><rect x="170.80" y="49.80" width="2.2" height="3" transform="rotate(90 171.9 55.9)"/><rect x="170.80" y="49.80" width="2.2" height="3" transform="rotate(135 171.9 55.9)"/><rect x="170.80" y="49.80" width="2.2" height="3" transform="rotate(180 171.9 55.9)"/><rect x="170.80" y="49.80" width="2.2" height="3" transform="rotate(225 171.9 55.9)"/><rect x="170.80" y="49.80" width="2.2" height="3" transform="rotate(270 171.9 55.9)"/><rect x="170.80" y="49.80" width="2.2" height="3" transform="rotate(315 171.9 55.9)"/><circle cx="171.9" cy="55.9" r="1.5" fill="#2e2e33"/></g>
<rect x="212" y="42" width="5" height="1"/><rect x="212" y="42" width="1" height="5"/><rect x="216" y="42" width="1" height="5"/><rect x="212" y="46" width="5" height="1"/>
<rect x="211" y="48" width="15" height="1"/><rect x="211" y="48" width="1" height="14"/><rect x="225" y="48" width="1" height="14"/><rect x="211" y="61" width="15" height="1"/>
<rect x="213" y="49" width="1" height="12"/><rect x="220" y="49" width="1" height="12"/><rect x="222" y="49" width="1" height="12"/>
<rect x="214" y="55" width="6" height="1"/><rect x="216" y="56" width="2" height="1"/><rect x="214" y="58" width="6" height="1"/><rect x="216" y="59" width="2" height="1"/>
<rect x="209" y="49" width="2" height="1"/><rect x="209" y="50" width="1" height="2"/><rect x="226" y="50" width="2" height="1"/><rect x="227" y="51" width="1" height="1"/><rect x="226" y="55" width="2" height="1"/><rect x="227" y="56" width="1" height="1"/>
<rect x="261" y="42" width="1" height="20"/><rect x="261" y="42" width="11" height="1"/><rect x="273" y="42" width="1.3" height="3"/><rect x="273.5" y="45" width="1" height="1"/><rect x="274.3" y="46" width="1.3" height="4"/><rect x="261" y="61" width="15" height="1.2"/><rect x="274.3" y="58" width="1.3" height="4"/><rect x="264" y="45" width="7" height="2"/>
<g fill="#fff" shape-rendering="crispEdges"><rect x="266" y="52" width="1" height="1"/><rect x="267" y="52" width="1" height="1"/><rect x="265" y="53" width="1" height="1"/><rect x="268" y="53" width="1" height="1"/><rect x="265" y="54" width="1" height="1"/><rect x="268" y="54" width="1" height="1"/><rect x="264" y="55" width="1" height="1"/><rect x="265" y="55" width="1" height="1"/><rect x="266" y="55" width="1" height="1"/><rect x="267" y="55" width="1" height="1"/><rect x="268" y="55" width="1" height="1"/><rect x="269" y="55" width="1" height="1"/><rect x="264" y="56" width="1" height="1"/><rect x="269" y="56" width="1" height="1"/><rect x="271" y="52" width="1" height="1"/><rect x="272" y="52" width="1" height="1"/><rect x="273" y="52" width="1" height="1"/><rect x="271" y="53" width="1" height="1"/><rect x="274" y="53" width="1" height="1"/><rect x="271" y="54" width="1" height="1"/><rect x="272" y="54" width="1" height="1"/><rect x="273" y="54" width="1" height="1"/><rect x="271" y="55" width="1" height="1"/><rect x="274" y="55" width="1" height="1"/><rect x="271" y="56" width="1" height="1"/><rect x="272" y="56" width="1" height="1"/><rect x="273" y="56" width="1" height="1"/><rect x="277" y="52" width="1" height="1"/><rect x="278" y="52" width="1" height="1"/><rect x="279" y="52" width="1" height="1"/><rect x="276" y="53" width="1" height="1"/><rect x="280" y="53" width="1" height="1"/><rect x="276" y="54" width="1" height="1"/><rect x="276" y="55" width="1" height="1"/><rect x="280" y="55" width="1" height="1"/><rect x="277" y="56" width="1" height="1"/><rect x="278" y="56" width="1" height="1"/><rect x="279" y="56" width="1" height="1"/></g>
<rect x="279" y="54" width="6" height="1"/><path d="M277 54.5 L280 52 L280 57Z" shape-rendering="auto"/>
<rect x="362" y="42" width="1" height="20"/><rect x="362" y="42" width="11" height="1"/><rect x="374" y="42" width="1.3" height="3"/><rect x="374.5" y="45" width="1" height="1"/><rect x="375.3" y="46" width="1.3" height="4"/><rect x="362" y="61" width="15" height="1.2"/><rect x="375.3" y="58" width="1.3" height="4"/><rect x="365" y="45" width="7" height="2"/>
<rect x="364" y="54" width="5" height="1"/><rect x="364" y="58" width="5" height="1"/><rect x="364" y="54" width="1" height="5"/><rect x="368" y="54" width="1" height="5"/><rect x="365" y="55" width="3" height="3" fill="#1a1a1e"/><rect x="370" y="54" width="5" height="1"/><rect x="370" y="58" width="5" height="1"/><rect x="370" y="54" width="1" height="5"/><rect x="374" y="54" width="1" height="5"/><rect x="371" y="55" width="3" height="3" fill="#1a1a1e"/><rect x="376" y="54" width="5" height="1"/><rect x="376" y="58" width="5" height="1"/><rect x="376" y="54" width="1" height="5"/><rect x="380" y="54" width="1" height="5"/><rect x="377" y="55" width="3" height="3" fill="#1a1a1e"/><rect x="369" y="56" width="1" height="1"/><rect x="375" y="56" width="1" height="1"/></g>
<g fill="#fb9a10" shape-rendering="crispEdges"><rect x="313" y="42" width="9" height="2"/><rect x="313" y="42" width="2" height="21"/><rect x="313" y="61" width="16" height="2"/><rect x="327" y="54" width="2" height="9"/></g>
<path d="M323.5 42.5 L323.5 47.5 L328.5 47.5Z" fill="none" stroke="#fb9a10" stroke-width="1.5"/>
<path d="M316 53 L317.5 57.5 L319 52 L320.5 56 L322 51.5 L323.5 56.5 L325 51 L326.5 52 L329 49.5" fill="none" stroke="#fb9a10" stroke-width="1.3"/>
</svg>
<svg class="a" style="left:1145px;top:20px" width="215" height="40" viewBox="0 0 215 40">
<g fill="#003f7e">
<rect x="19" y="16.6" width="8.5" height="4.6"/>
<rect x="27" y="8.5" width="4.8" height="20.6"/>
<rect x="36" y="8.5" width="16" height="4.6"/><rect x="36" y="16.6" width="16" height="4.6"/><rect x="36" y="24.5" width="16" height="4.6"/>
<rect x="56" y="8.5" width="4.7" height="20.6"/>
<rect x="64.5" y="8.5" width="4.8" height="20.6"/>
<rect x="86.5" y="8.5" width="16.5" height="4.6"/><rect x="86.5" y="16.6" width="16.5" height="4.6"/><rect x="86.5" y="24.5" width="16.5" height="4.6"/>
<rect x="107" y="8.5" width="4.8" height="20.6"/><rect x="107" y="24.5" width="13.8" height="4.6"/>
<rect x="124.4" y="8.5" width="4.8" height="20.6"/>
<rect x="145.2" y="8.5" width="16" height="4.6"/><rect x="145.2" y="16.6" width="16" height="4.6"/><rect x="145.2" y="24.5" width="16" height="4.6"/>
<rect x="165.3" y="8.5" width="4.8" height="20.6"/>
<path d="M172.5 19.5 L178 19.5 L183.3 29.1 L177.6 29.1Z"/>
<rect x="194" y="17.2" width="9.8" height="4.2"/>
</g>
<g fill="none" stroke="#003f7e" stroke-width="4.6">
<path d="M67 10.8 H73 A8.2 8.05 0 0 1 73 26.8 H67"/>
<path d="M127 10.8 H133 A4 4.05 0 0 1 133 18.9 H127 M127 18.9 H134.5 A4.7 3.95 0 0 1 134.5 26.8 H127"/>
<path d="M168 10.8 H174 A4.3 4.05 0 0 1 174 18.9 H168"/>
<path d="M200.2 12.6 A8 8.05 0 1 0 201.5 19.5"/>
</g>
<rect x="5" y="16.6" width="11" height="4.6" rx="2.3" fill="#ffc400"/>
<rect x="14" y="8.3" width="5" height="10" rx="2.5" fill="#00a048"/>
<rect x="14" y="19" width="5" height="10.1" rx="2.5" fill="#00a8e8"/>
<rect x="14" y="16.6" width="5" height="4.6" fill="#0d3a3a"/>
</svg>
<div class="a" style="left:20px;top:309px;width:148px;height:29px;border:2px solid #f00;border-radius:4px"></div>


<div class="a" style="left:1365px;top:335px;width:17px;height:405px;border:1px solid #8a8a90;background:#4a4a52"></div>
<div class="a" style="left:1367px;top:337px;width:13px;height:19px;background:#8e8e94"></div>
<svg class="a" style="left:1367px;top:337px" width="13" height="19"><path d="M1.5 12 L6.5 6.5 L11.5 12Z" fill="#fff"/></svg>
<div class="a" style="left:1366px;top:357px;width:15px;height:1px;background:#8a8a90"></div>
<div class="a" style="left:1367px;top:358px;width:13px;height:293px;background:#929298"></div>
<svg class="a" style="left:1368px;top:498px" width="11" height="12"><path d="M1 1.5H10M1 4H10M1 6.5H10M1 9H10" stroke="#fff" stroke-width="1"/></svg>
<div class="a" style="left:1366px;top:718px;width:15px;height:1px;background:#8a8a90"></div>
<div class="a" style="left:1367px;top:719px;width:13px;height:19px;background:#8e8e94"></div>
<svg class="a" style="left:1367px;top:719px" width="13" height="19"><path d="M1.5 7 L11.5 7 L6.5 12.5Z" fill="#fff"/></svg>
<div class="a" style="left:1196px;top:745px;width:29px;height:19px;background:#8e8e94"></div>
<div class="a" style="left:1234px;top:745px;width:29px;height:19px;background:#8e8e94"></div>
<div class="a" style="left:1272px;top:745px;width:29px;height:19px;background:#8e8e94"></div>
<div class="a" style="left:1310px;top:745px;width:29px;height:19px;background:#8e8e94"></div>
<div class="a" style="left:1358px;top:745px;width:19px;height:19px;background:#8e8e94"></div>
<svg class="a" style="left:1196px;top:745px" width="29" height="19" viewBox="0 0 29 19"><circle cx="14.4" cy="8.6" r="5" fill="none" stroke="#a8b0c4" stroke-width="0.8" stroke-dasharray="2 1"/><rect x="8" y="4" width="1.3" height="7" fill="#5a5e66"/><path d="M6 8.3 L11.3 8.3 L8.65 11.3Z" fill="#5a5e66"/><rect x="20" y="6" width="1.3" height="7" fill="#5a5e66"/><path d="M18 8.5 L23.3 8.5 L20.65 5.5Z" fill="#5a5e66"/></svg>
<svg class="a" style="left:1234px;top:745px" width="29" height="19" viewBox="0 0 29 19"><rect x="7.5" y="2.5" width="6.5" height="9.5" fill="#c8ccd8" stroke="#3a3a40" stroke-width="1"/><path d="M11.5 5.5 H17 L19.5 8 V15.5 H11.5Z" fill="#eef0f8" stroke="#3a3a40" stroke-width="1.1"/><path d="M13 10.5H17M13 12.5H17" stroke="#3a3a40" stroke-width="0.9"/></svg>
<div class="a" style="left:1232px;top:743px;width:34px;height:23px;border:1px dotted #fff"></div>
<div class="a" style="left:1229px;top:737px;width:40px;height:33px;border:2px solid #f00;border-radius:5px"></div>
<svg class="a" style="left:1272px;top:745px" width="29" height="19" viewBox="0 0 29 19"><rect x="9.5" y="2.5" width="9" height="7" fill="#e6eaf6" stroke="#55555a" stroke-width="0.9"/><path d="M7.5 9.5 H20.5 Q21.5 9.5 21.5 11 V15 Q21.5 16.5 20.5 16.5 H7.5 Q6.5 16.5 6.5 15 V11 Q6.5 9.5 7.5 9.5Z" fill="#c8c8ce" stroke="#4a4a50" stroke-width="1"/><rect x="8" y="12" width="12" height="1.2" fill="#111"/><rect x="9.5" y="13.5" width="9" height="2" fill="#fff"/></svg>
<svg class="a" style="left:1310px;top:745px" width="29" height="19" viewBox="0 0 29 19" shape-rendering="crispEdges"><rect x="7" y="2" width="14" height="14" fill="#0a0a0a"/><rect x="10" y="3" width="8" height="6" fill="#9a9aa0"/><rect x="8" y="3" width="1" height="12" fill="#777"/><rect x="19" y="4" width="1" height="11" fill="#777"/><rect x="10" y="9" width="8" height="1" fill="#222"/><rect x="16" y="11" width="2" height="3" fill="#8a8a90"/><rect x="19" y="2.5" width="1" height="1" fill="#ccc"/></svg>
<svg class="a" style="left:1358px;top:745px" width="19" height="19" viewBox="0 0 19 19"><rect x="8" y="5.8" width="7.5" height="6.5" fill="#e4e8f4" stroke="#777" stroke-width="0.5"/><path d="M6 12 H16.5 Q17.5 12 17.5 13 V16.5 Q17.5 17.5 16.5 17.5 H6 Q5 17.5 5 16.5 V13 Q5 12 6 12Z" fill="#c8c8ce" stroke="#4a4a50" stroke-width="0.9"/><rect x="6.5" y="14" width="9.5" height="1.1" fill="#111"/><rect x="7.5" y="15.3" width="8" height="1.5" fill="#eef"/><path d="M6 3.5 Q8 2 10.5 3.3" fill="none" stroke="#111" stroke-width="1.1"/><path d="M2 8.2 Q4 5.5 7 6" fill="none" stroke="#111" stroke-width="1"/><path d="M2.5 8 Q5 10 8 9" fill="#fff" stroke="#ccd" stroke-width="0.6"/><circle cx="8.3" cy="7.3" r="1.9" fill="#000"/><circle cx="8.7" cy="6.7" r="0.5" fill="#fff"/></svg>
<div class="a" style="left:719px;top:362px;width:185px;height:1px;background:repeating-linear-gradient(90deg,#f0d020 0 2px,#50b8f0 2px 4px,#f070c0 4px 6px,#909090 6px 8px);opacity:0.85"></div>
<div class="a" style="left:765px;top:364px;width:46px;height:45px;background:#f2f2f8"></div>
<div class="a" style="left:769px;top:364px;width:2px;height:45px;background:#7a78b8"></div>
<div class="a" style="left:803px;top:364px;width:2px;height:45px;background:#8a88c0"></div>
<div class="a" style="left:765px;top:364px;width:46px;height:2px;background:#7a78b8"></div>
<div class="a" style="left:765px;top:379px;width:46px;height:2px;background:#9a98cc"></div>
<div class="a" style="left:765px;top:394px;width:46px;height:2px;background:#9a98cc"></div>
<div class="a" style="left:786px;top:386px;width:10px;height:5px;background:#3a3038"></div>
<div class="a" style="left:772px;top:404px;width:22px;height:3px;background:#d8c8c0"></div>
<div class="a" style="left:811px;top:364px;width:46px;height:45px;background:#f6f4f2"></div>
<div class="a" style="left:819px;top:364px;width:1px;height:45px;background:#b0a090"></div>
<div class="a" style="left:835px;top:364px;width:1px;height:45px;background:#c8b8a8"></div>
<div class="a" style="left:851px;top:364px;width:1px;height:45px;background:#b0a090"></div>
<div class="a" style="left:811px;top:396px;width:46px;height:13px;background:linear-gradient(#eadcd0,#d8c4b4)"></div>
<div class="a" style="left:818px;top:383px;width:18px;height:4px;background:#2a2428;transform:rotate(-18deg)"></div>
<div class="a" style="left:836px;top:383px;width:12px;height:3px;background:#d8c0b0"></div>
<div class="a" style="left:857px;top:364px;width:47px;height:45px;background:#ece2da"></div>
<div class="a" style="left:873px;top:364px;width:2px;height:45px;background:#d4b888"></div>
<div class="a" style="left:888px;top:364px;width:2px;height:45px;background:#d4b888"></div>
<div class="a" style="left:860px;top:372px;width:40px;height:1px;background:#d8c8a8"></div>
<div class="a" style="left:866px;top:386px;width:30px;height:6px;background:#f4f0f0"></div>
<div class="a" style="left:892px;top:388px;width:6px;height:5px;background:#d8b8a8"></div>
<div class="a" style="left:728px;top:369px;width:2px;height:30px;background:#c8c8cc;opacity:0.6"></div>
<div class="a" style="left:733px;top:369px;width:2px;height:30px;background:#c8c8cc;opacity:0.6"></div>
<div class="a" style="left:742px;top:369px;width:2px;height:30px;background:#c8c8cc;opacity:0.6"></div>
<div class="a" style="left:747px;top:369px;width:2px;height:30px;background:#c8c8cc;opacity:0.6"></div>
<div class="a" style="left:754px;top:369px;width:2px;height:30px;background:#c04050;opacity:0.5"></div>
<div class="a" style="left:750px;top:412px;width:6px;height:6px;background:#d42828;"></div>
<div class="a" style="left:756px;top:418px;width:6px;height:6px;background:#203c90;"></div>
<div class="a" style="left:796px;top:412px;width:6px;height:6px;background:#d42828;"></div>
<div class="a" style="left:802px;top:418px;width:6px;height:6px;background:#203c90;"></div>
<div class="a" style="left:842px;top:412px;width:6px;height:6px;background:#d42828;"></div>
<div class="a" style="left:848px;top:418px;width:6px;height:6px;background:#203c90;"></div>
<div class="a" style="left:888px;top:412px;width:6px;height:6px;background:#d42828;"></div>
<div class="a" style="left:894px;top:418px;width:6px;height:6px;background:#203c90;"></div>
<div class="a" style="left:750px;top:457px;width:6px;height:6px;background:#d42828;"></div>
<div class="a" style="left:756px;top:463px;width:6px;height:6px;background:#203c90;"></div>
<div class="a" style="left:796px;top:457px;width:6px;height:6px;background:#d42828;"></div>
<div class="a" style="left:802px;top:463px;width:6px;height:6px;background:#203c90;"></div>
<div class="a" style="left:727px;top:425px;width:2px;height:22px;background:#b8b8c0;opacity:0.55"></div>
<div class="a" style="left:738px;top:425px;width:2px;height:22px;background:#b8b8c0;opacity:0.55"></div>
<div class="a" style="left:746px;top:425px;width:2px;height:22px;background:#b8b8c0;opacity:0.55"></div>
<div class="a" style="left:786px;top:425px;width:2px;height:22px;background:#b8b8c0;opacity:0.55"></div>
<div class="a" style="left:812px;top:425px;width:2px;height:22px;background:#b8b8c0;opacity:0.55"></div>
<div class="a" style="left:851px;top:425px;width:2px;height:22px;background:#b8b8c0;opacity:0.55"></div>
<div class="a" style="left:891px;top:425px;width:2px;height:22px;background:#b8b8c0;opacity:0.55"></div>
<div class="a" style="left:798px;top:426px;width:2px;height:20px;background:#7080b0;opacity:0.6"></div>
<div class="a" style="left:808px;top:426px;width:2px;height:20px;background:#7080b0;opacity:0.6"></div>
<div class="a" style="left:846px;top:426px;width:2px;height:20px;background:#7080b0;opacity:0.6"></div>
<div class="a" style="left:885px;top:426px;width:2px;height:20px;background:#7080b0;opacity:0.6"></div>
<div class="a" style="left:773px;top:424px;width:18px;height:20px;background:#e4e8f0;"></div>
<div class="a" style="left:776px;top:426px;width:2px;height:16px;background:#7088c0;"></div>
<div class="a" style="left:786px;top:426px;width:2px;height:16px;background:#7088c0;"></div>
<div class="a" style="left:773px;top:432px;width:18px;height:2px;background:#8898c8;"></div>
<div class="a" style="left:818px;top:424px;width:19px;height:20px;background:#6a5a50;"></div>
<div class="a" style="left:820px;top:426px;width:2px;height:16px;background:#302820;"></div>
<div class="a" style="left:826px;top:426px;width:2px;height:16px;background:#d8d0c8;"></div>
<div class="a" style="left:832px;top:426px;width:2px;height:16px;background:#302820;"></div>
<div class="a" style="left:870px;top:424px;width:18px;height:20px;background:#e8dcd0;"></div>
<div class="a" style="left:874px;top:428px;width:10px;height:8px;background:#c0a890;"></div>
<div class="a" style="left:726px;top:470px;width:2px;height:18px;background:#b8b8c0;opacity:0.55"></div>
<div class="a" style="left:737px;top:470px;width:2px;height:18px;background:#b8b8c0;opacity:0.55"></div>
<div class="a" style="left:745px;top:470px;width:2px;height:18px;background:#b8b8c0;opacity:0.55"></div>
<div class="a" style="left:771px;top:470px;width:18px;height:19px;background:#e8e4ea;"></div>
<div class="a" style="left:775px;top:472px;width:2px;height:16px;background:#8090c0;"></div>
<div class="a" style="left:784px;top:472px;width:2px;height:16px;background:#8090c0;"></div>
<div class="a" style="left:800px;top:460px;width:2px;height:24px;background:#b0b0b8;opacity:0.55"></div>
<div class="a" style="left:816px;top:460px;width:2px;height:24px;background:#b0b0b8;opacity:0.55"></div>
<div class="a" style="left:822px;top:460px;width:2px;height:24px;background:#b0b0b8;opacity:0.55"></div>
<div class="a" style="left:832px;top:460px;width:2px;height:24px;background:#b0b0b8;opacity:0.55"></div>
<div class="a" style="left:841px;top:460px;width:2px;height:24px;background:#b0b0b8;opacity:0.55"></div>
<div class="a" style="left:850px;top:460px;width:2px;height:24px;background:#b0b0b8;opacity:0.55"></div>
<div class="a" style="left:770px;top:455px;width:88px;height:1px;background:#8888b0;opacity:0.5"></div>
<div class="a" style="left:857px;top:454px;width:47px;height:45px;background:#f0ecf0;"></div>
<div class="a" style="left:863px;top:454px;width:3px;height:45px;background:#404090;"></div>
<div class="a" style="left:892px;top:454px;width:3px;height:45px;background:#404090;"></div>
<div class="a" style="left:857px;top:476px;width:47px;height:5px;background:#8080b8;"></div>
<div class="a" style="left:866px;top:470px;width:25px;height:2px;background:#e0c8a0;"></div>
<div class="a" style="left:866px;top:488px;width:25px;height:2px;background:#e0c8a0;"></div>
<div class="a" style="left:880px;top:480px;width:12px;height:6px;background:#c8a898;"></div>
<div class="a" style="left:704px;top:504px;width:75px;height:3px;background:linear-gradient(90deg,#202020,#404040 40%,#909090 55%,#202020 65%,#e0e0e0 80%,#707070)"></div>
<div class="a" style="left:704px;top:502px;width:40px;height:1px;background:#b0b0b0;opacity:0.6"></div>

<svg class="a" style="left:313px;top:219px" width="32" height="32" viewBox="-16 -16 32 32"><circle r="14.4" fill="#f5150a"/><circle r="13.7" fill="none" stroke="#ff0000" stroke-width="1.4"/><g fill="none" stroke="#fff" stroke-width="2.3" stroke-linejoin="miter"><path d="M-2.6 -3.6 L-0.3 -5.6 V5.3" /></g></svg>
<svg class="a" style="left:147px;top:322px" width="32" height="32" viewBox="-16 -16 32 32"><circle r="14.4" fill="#f5150a"/><circle r="13.7" fill="none" stroke="#ff0000" stroke-width="1.4"/><g fill="none" stroke="#fff" stroke-width="2.3" stroke-linejoin="miter"><path d="M-3.6 -2.6 Q-3.4 -5.2 -0.4 -5.2 Q2.8 -5.2 2.8 -2.4 Q2.8 -0.6 0 1.4 L-3.6 4.3 H3.6"/></g></svg>
<svg class="a" style="left:1251px;top:708px" width="32" height="32" viewBox="-16 -16 32 32"><circle r="14.4" fill="#f5150a"/><circle r="13.7" fill="none" stroke="#ff0000" stroke-width="1.4"/><g fill="none" stroke="#fff" stroke-width="2.3" stroke-linejoin="miter"><path d="M-3.6 -4.2 H2.8 L-0.4 -0.6 Q3.4 -0.6 3.4 2 Q3.4 4.4 -0.2 4.4 Q-2.8 4.4 -3.9 2.9"/></g></svg>
</body></html>
